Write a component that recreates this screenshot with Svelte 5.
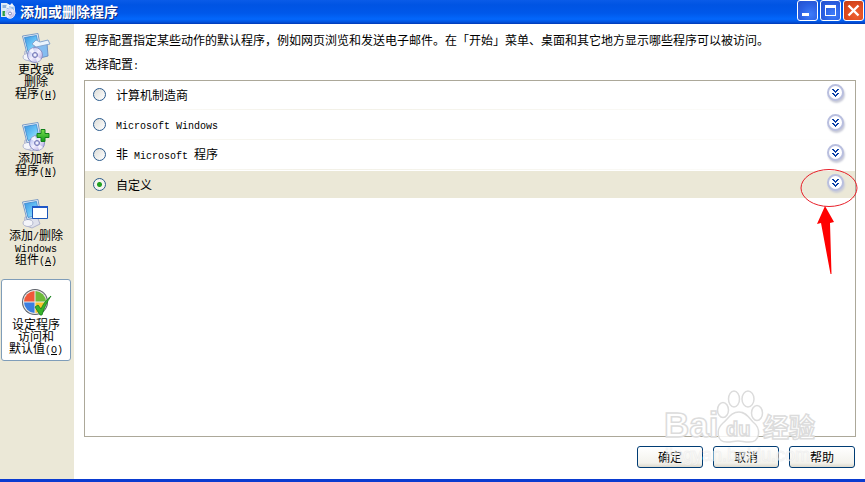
<script>
  const tasks = [
    { icon: 'change', lines: ['更改或', '删除'], last: '程序', key: 'H' },
    { icon: 'add', lines: ['添加新'], last: '程序', key: 'N' },
    { icon: 'windows', lines: ['添加/删除', 'Windows'], last: '组件', key: 'A' },
    { icon: 'defaults', lines: ['设定程序', '访问和'], last: '默认值', key: 'O' }
  ];
  const options = [
    { id: 'oem', label: '计算机制造商' },
    { id: 'ms', label: 'Microsoft Windows' },
    { id: 'non-ms', label: '非 Microsoft 程序' },
    { id: 'custom', label: '自定义' }
  ];
  const actions = ['确定', '取消', '帮助'];

  let active = $state('defaults');
  let chosen = $state('custom');

  // Latin runs are set in the monospaced face, Chinese runs in the body face.
  const runs = (text) => text.match(/[\x20-\x7e]+|[^\x20-\x7e]+/g) ?? [];
  const isLatin = (text) => /^[\x20-\x7e]+$/.test(text);
</script>

{#snippet mixed(text)}{#each runs(text) as run}<span class:latin={isLatin(run)}>{run}</span>{/each}{/snippet}

{#snippet monitor()}
  <path d="M5 20l12-1 3 8-8 4-8-3z" fill="#dfe1ec" stroke="#aeb2cb" />
  <ellipse cx="8" cy="26" rx="5" ry="3.500" fill="#f4f5fa" stroke="#b4b8cf" />
  <path d="M2.500 5 18 2.500l3 17-14 3z" fill="#e6effa" stroke="#7c9cc6" />
  <path d="M4.500 6.500 16.500 4.500l2.500 13.500-11 2.500z" fill="url(#screen)" stroke="#3a86cc" stroke-width=".8" />
{/snippet}

{#snippet disc(x, y)}
  <circle cx={x} cy={y} r="7.500" fill="url(#disc)" stroke="#8b90c6" />
  <path d="M{x} {y}l-6-4a7 7 0 0 1 4-3zM{x} {y}l6 4a7 7 0 0 1-4 3z" fill="#fff" opacity=".75" />
  <circle cx={x} cy={y} r="2.500" fill="#c5c8ea" stroke="#7378b5" />
  <circle cx={x} cy={y} r="1" fill="#fff" />
{/snippet}

<svg class="defs" aria-hidden="true">
  <defs>
    <linearGradient id="screen" x2="1" y2="1">
      <stop offset="0" stop-color="#3c95e2" />
      <stop offset=".5" stop-color="#66c2f5" />
      <stop offset="1" stop-color="#b4e8fd" />
    </linearGradient>
    <linearGradient id="disc" x2="1" y2="1">
      <stop offset="0" stop-color="#a3b2ee" />
      <stop offset=".5" stop-color="#f1effd" />
      <stop offset="1" stop-color="#a093da" />
    </linearGradient>
    <linearGradient id="plus" x2="0" y2="1">
      <stop offset="0" stop-color="#7be04c" />
      <stop offset="1" stop-color="#119a1b" />
    </linearGradient>
  </defs>
</svg>

<div class="window">
  <header>
    <svg width="16" height="18" viewBox="0 0 16 18" aria-hidden="true">
      <path d="M1 1h6l2 2v12H1z" fill="#dde9f6" />
      <path d="M2.500 9h3v5h-3z" fill="#2f9e45" />
      <path d="M2.500 3h4v3h-4z" fill="#8fb2dd" />
      <path d="M6 6l8-2 1 8-8 3z" fill="#93bbe8" stroke="#e9f1fc" />
      <path d="M6 5l2-3 2 1 2-2 2 3z" fill="#f1f6fc" />
      <circle cx="10" cy="11.500" r="4.800" fill="url(#disc)" stroke="#dfe2f7" />
      <circle cx="10" cy="11.500" r="1.500" fill="#fff" stroke="#8085bd" />
    </svg>
    <h1>添加或删除程序</h1>
    <div class="controls">
      <button aria-label="最小化"><svg viewBox="0 0 19 19"><path d="M4 12h7v3H4z" fill="#fff" /></svg></button>
      <button aria-label="最大化"><svg viewBox="0 0 19 19"><path d="M4 4h11v11H4zM5 7v7h9V7z" fill="#fff" fill-rule="evenodd" /></svg></button>
      <button class="close" aria-label="关闭"><svg viewBox="0 0 19 19"><path d="M4.500 4.500l10 10M14.500 4.500l-10 10" stroke="#fff" stroke-width="2.400" /></svg></button>
    </div>
  </header>

  <div class="body">
    <nav>
      {#each tasks as task}
        <button class:active={active === task.icon} onclick={() => (active = task.icon)}>
          <svg width="32" height="32" viewBox="0 0 32 32" aria-hidden="true">
            {#if task.icon === 'change'}
              {@render monitor()}
              <path d="M14 14l13-2 1 13-12 3z" fill="#84bdf0" stroke="#6f93c4" />
              <path d="M12 13l4-4 4 2 8-2 2 4-14 3z" fill="#eaf4fd" stroke="#85a6d0" />
              {@render disc(15, 24)}
            {:else if task.icon === 'add'}
              {@render monitor()}
              {@render disc(17, 23)}
              <path d="M21 9.500h4v4h4v4h-4v4h-4v-4h-4v-4h4z" fill="url(#plus)" stroke="#11801a" />
            {:else if task.icon === 'windows'}
              {@render monitor()}
              <path d="M12.500 9.500h15v12h-15z" fill="#fff" stroke="#1a55b8" />
              <path d="M12 9h16v2H12z" fill="#2058c8" />
            {:else}
              <circle cx="15" cy="16" r="13" fill="#5c6068" />
              <circle cx="15" cy="16" r="12" fill="#e8e8e8" />
              <path d="M14.500 15.500V5A11 11 0 0 0 4 15.500z" fill="#f0583a" />
              <path d="M15.500 15.500V5A11 11 0 0 1 26 15.500z" fill="#6dbb3a" />
              <path d="M14.500 16.500V27A11 11 0 0 1 4 16.500z" fill="#3a7fe0" />
              <path d="M15.500 16.500V27A11 11 0 0 0 26 16.500z" fill="#fbc42d" />
              <path d="M15 21l3-2 3 4c2-5 5-9 10-13-4 6-7 12-9 19h-2z" fill="#38b52c" stroke="#15801a" stroke-width=".8" />
            {/if}
          </svg>
          {#each task.lines as line}<span class="line">{@render mixed(line)}</span>{/each}
          <span class="line">{task.last}<span class="latin">(<u>{task.key}</u>)</span></span>
        </button>
      {/each}
    </nav>

    <main>
      <p>程序配置指定某些动作的默认程序，例如网页浏览和发送电子邮件。在「开始」菜单、桌面和其它地方显示哪些程序可以被访问。</p>
      <p id="choose">选择配置<span class="latin">:</span></p>

      <div class="panel" role="radiogroup" aria-labelledby="choose">
        {#each options as option}
          <div class="row" class:selected={chosen === option.id}>
            <input type="radio" id={option.id} name="config" value={option.id} bind:group={chosen} />
            <label for={option.id}>{@render mixed(option.label)}</label>
            <button class="expand" aria-label="展开">
              <svg width="7" height="8" viewBox="0 0 7 8" shape-rendering="crispEdges" fill="#0a3fa6">
                {#each [0, 4] as y}
                  <path d="M0 {y}h2v1h1v1h1v-1h1v-1h2v1h-1v1h-1v1h-1v1h-1v-1h-1v-1h-1v-1h-1z" />
                {/each}
              </svg>
            </button>
          </div>
        {/each}
      </div>

      <footer>
        {#each actions as action}<button>{action}</button>{/each}
      </footer>
    </main>
  </div>

  <svg class="callout" width="60" height="108" viewBox="0 0 60 108" aria-hidden="true">
    <ellipse cx="30" cy="20" rx="28" ry="18.500" fill="none" stroke="#e8202a" />
    <path d="M26 38l9 16-4 1 1.500 51h-1l-9.500-51-4 1z" fill="#f00" />
  </svg>

  <svg class="watermark" width="160" height="84" viewBox="0 0 160 84" aria-hidden="true">
    <g fill="#fff" fill-opacity=".85" stroke="#dcdcdc" stroke-width="1.500">
      <ellipse cx="62" cy="23" rx="5.500" ry="7.500" />
      <ellipse cx="73" cy="12" rx="5.500" ry="8" />
      <ellipse cx="87" cy="12" rx="6" ry="8" />
      <ellipse cx="96" cy="26" rx="5.500" ry="7.500" />
      <path d="M78 25c7 0 10 6 14 10 8 6 8 20-4 20-5 0-7-1-11-1s-6 1-11 1c-11 0-11-13-4-19 5-4 8-11 16-11z" />
      <text class="brand" x="3" y="50">Bai</text>
      <text class="du" x="65" y="49">du</text>
      <text class="exp" x="102" y="50">经验</text>
    </g>
    <text class="site" x="4" y="74">jingyan.baidu.com</text>
  </svg>
</div>

<style>
  :global(body) {
    background: #fff;
  }
  .defs {
    position: absolute;
    width: 0;
    height: 0;
  }
  .window {
    position: relative;
    box-sizing: border-box;
    display: flex;
    flex-direction: column;
    min-height: 100vh;
    border-bottom: 3px solid #0a3bd0;
    font: 12px/12px "Noto Sans CJK SC", sans-serif;
    color: #000;
  }
  .window > header {
    display: flex;
    align-items: center;
    height: 24px;
    gap: 4px;
    box-sizing: border-box;
    padding: 0 1px 3px 0;
    background: linear-gradient(#0a5be8, #0054e3 20%, #0058ea 55%, #0367fc 80%, #0353dd 92%, #0138b4);
  }
  h1 {
    flex: 1;
    margin: 0;
    font-size: 14px;
    line-height: 16px;
    color: #fff;
    text-shadow: 1px 1px #0a2a80;
  }
  button {
    font: inherit;
    color: inherit;
    padding: 0;
    margin: 0;
    box-sizing: border-box;
  }
  .controls {
    display: flex;
    gap: 2px;
  }
  .controls button {
    width: 21px;
    height: 21px;
    border: 1px solid #fff;
    border-radius: 3px;
    background: radial-gradient(circle at 65% 70%, #3f7dfa, #2a5fe2 55%, #2450cc);
  }
  .controls .close {
    background: radial-gradient(circle at 65% 70%, #ee6030, #dd4a20 55%, #c03c14);
  }
  .controls svg {
    display: block;
    width: 19px;
    height: 19px;
  }
  .body {
    flex: 1;
    display: flex;
  }
  nav {
    flex: none;
    box-sizing: border-box;
    width: 74px;
    padding: 0 3px 0 1px;
    display: flex;
    flex-direction: column;
    gap: 7px;
    background: #ebe8d7;
  }
  nav button {
    display: flex;
    flex-direction: column;
    align-items: center;
    padding: 6px 0;
    border: 1px solid transparent;
    border-radius: 3px;
    background: none;
  }
  nav button.active {
    border-color: #7f9db9;
    background: #fff;
  }
  .line {
    height: 12px;
    white-space: nowrap;
  }
  .latin {
    font-family: "Liberation Mono", monospace;
    font-size: 10px;
    line-height: 10px;
    white-space: pre;
  }
  main {
    flex: 1;
    min-width: 0;
    display: flex;
    flex-direction: column;
    padding: 4px 9px 11px 10px;
    background: #fff;
  }
  p {
    margin: 0 0 0 1px;
    line-height: 24px;
  }
  .panel {
    flex: 1;
    margin: 4px 0 9px;
    box-shadow: inset 0 0 0 1px #aca899;
  }
  .row {
    display: flex;
    align-items: center;
    box-sizing: border-box;
    height: 30px;
    margin: 0 1px;
    padding: 0 11px 1px 8px;
    gap: 10px;
    background: linear-gradient(90deg, #fff, #f2f0e6 30%, #fff) bottom / 100% 1px no-repeat;
  }
  .row.selected {
    background: linear-gradient(#ebe8d7, #ebe8d7) 0 1px / 100% 27px no-repeat;
  }
  .row input {
    appearance: none;
    width: 13px;
    height: 13px;
    margin: 0;
    border: 1px solid #2a5a8c;
    border-radius: 50%;
    background: linear-gradient(135deg, #dcdcd7, #fff);
  }
  .row input:checked {
    background: radial-gradient(circle, #21a121 2px, #f4f4f0 3px);
  }
  .row label {
    flex: 1;
  }
  .expand {
    display: grid;
    place-items: center;
    width: 17px;
    height: 17px;
    margin-bottom: 4px;
    border: 2px solid #b9bfdf;
    border-radius: 50%;
    background: #fff;
    box-shadow: 1px 2px 2px #c9cbd8;
  }
  footer {
    display: flex;
    justify-content: flex-end;
    gap: 10px;
    padding-right: 1px;
  }
  footer button {
    width: 66px;
    height: 22px;
    border: 1px solid #003c74;
    border-radius: 3px;
    background: linear-gradient(#fff, #f3f2ec 80%, #dcd8cc);
  }
  .callout {
    position: absolute;
    top: 168px;
    right: 6px;
    pointer-events: none;
  }
  .watermark {
    position: absolute;
    right: 44px;
    bottom: 8px;
    pointer-events: none;
  }
  .watermark text {
    font-family: "Liberation Sans", "Noto Sans CJK SC", sans-serif;
    font-weight: bold;
  }
  .watermark .brand {
    font-size: 35px;
  }
  .watermark .du {
    font-size: 20px;
  }
  .watermark .exp {
    font-size: 26px;
  }
  .watermark .site {
    font-size: 18px;
    font-weight: normal;
    fill: #fff;
    fill-opacity: 0.6;
    stroke: #d8d8d8;
    stroke-opacity: 0.3;
    stroke-width: 1px;
  }
</style>
